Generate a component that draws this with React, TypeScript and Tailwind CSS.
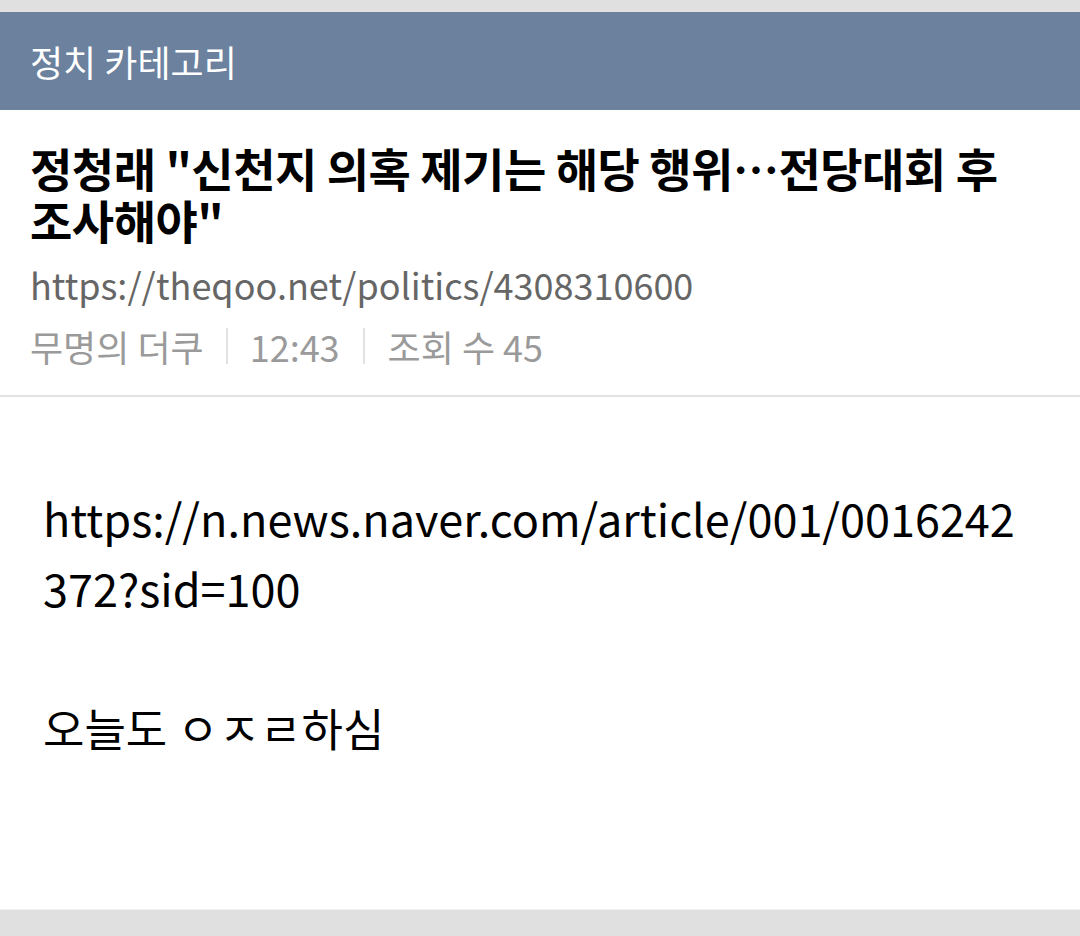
import React from 'react';

const font = { fontFamily: '"Noto Sans CJK KR", "Noto Sans", sans-serif' };

export default function App() {
  return (
    <div className="w-[1080px] h-[936px] flex flex-col bg-[#e0e0e0] overflow-hidden" style={font}>
      <div className="h-[12px] shrink-0" />

      {/* category bar */}
      <header className="h-[98px] shrink-0 bg-[#6b819e] flex items-center px-[30px]">
        <span className="text-white text-[36px] leading-none">정치 카테고리</span>
      </header>

      {/* title block */}
      <section className="bg-white px-[30px] pt-[31px] pb-[25px] border-b-2 border-[#e2e2e2] shrink-0">
        <h1 className="text-black font-bold text-[46px] leading-[52px] tracking-[-0.5px] pr-[40px]">
          정청래 "신천지 의혹 제기는 해당 행위…전당대회 후 조사해야"
        </h1>
        <div className="text-[#666666] text-[36px] leading-[48px] mt-[15px]">
          https://theqoo.net/politics/4308310600
        </div>
        <div className="flex items-center text-[#9a9a9a] text-[36px] leading-[48px] mt-[14px]">
          <span>무명의 더쿠</span>
          <span className="w-[2px] h-[36px] bg-[#e2e2e2] mx-[22px]" />
          <span>12:43</span>
          <span className="w-[2px] h-[36px] bg-[#e2e2e2] mx-[23px]" />
          <span>조회 수 45</span>
        </div>
      </section>

      {/* body */}
      <main className="flex-1 bg-white pl-[43px] pr-[50px] pt-[86px] text-black text-[45px] leading-[70px] break-all border-b border-[#f2f2f2]">
        <p>https://n.news.naver.com/article/001/0016242372?sid=100</p>
        <p>&nbsp;</p>
        <p>오늘도 ㅇㅈㄹ하심</p>
      </main>

      <div className="h-[26px] shrink-0 bg-[#e0e0e0]" />
    </div>
  );
}
